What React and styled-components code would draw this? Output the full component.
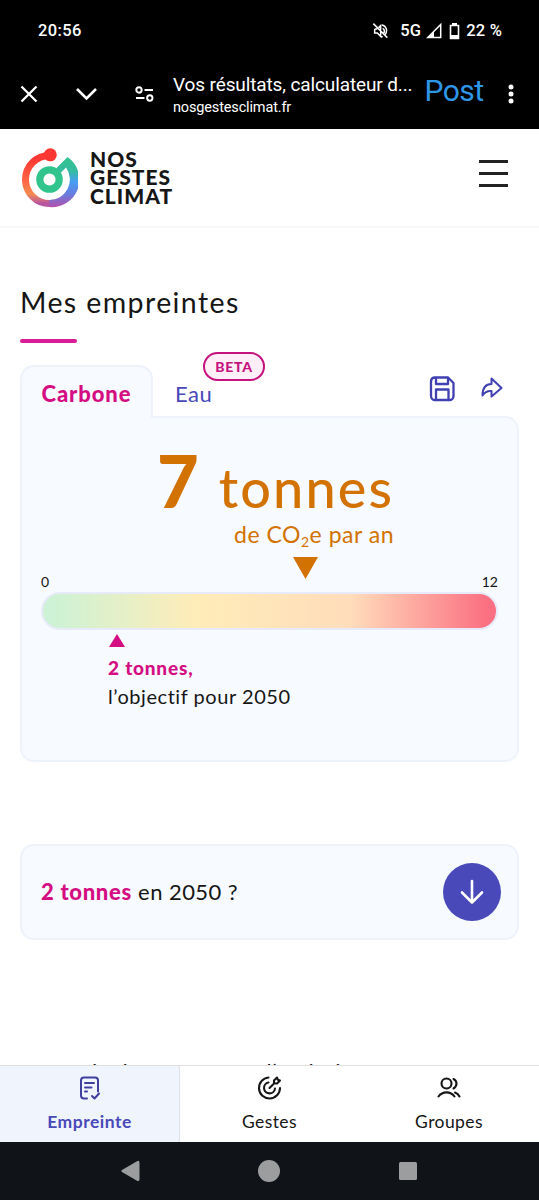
import styled, { createGlobalStyle, css } from "styled-components";

const GlobalStyle = createGlobalStyle`
  * {
    box-sizing: border-box;
  }

  body {
    margin: 0;
    background: #fff;
    overflow: hidden;
  }

  p, h1, h2 {
    margin: 0;
    font-weight: 400;
  }

  button {
    padding: 0;
    border: 0;
    background: none;
    font: inherit;
    color: inherit;
  }
`;

const Screen = styled.div`
  display: flex;
  flex-direction: column;
  width: 539px;
  height: 1200px;
  overflow: hidden;
  background: #fff;
  color: #161616;
  font-family: Lato, "Open Sans", sans-serif;
  white-space: nowrap;

  svg {
    display: block;
    flex: none;
  }
`;

/* letter-spacing and size change from one label to the next */
const Text = styled.span`
  font-size: ${(p) => p.$size}px;
  line-height: ${(p) => p.$line || p.$size + 6}px;
  font-weight: ${(p) => p.$weight || 400};
  letter-spacing: ${(p) => p.$spacing || 0}px;
  color: ${(p) => p.$color || "inherit"};
`;

const StatusBar = styled.div`
  display: flex;
  align-items: center;
  justify-content: space-between;
  height: 62px;
  padding: 0 37px 0 38px;
  background: #000;
  color: #fff;
  font-family: Roboto, sans-serif;
`;

const StatusIcons = styled.div`
  display: flex;
  align-items: center;
  gap: 5px;

  > svg:first-child {
    margin-right: 7px;
  }
`;

const BrowserBar = styled.div`
  display: flex;
  align-items: center;
  height: 67px;
  padding: 0 19px 3px 20px;
  background: #000;
  color: #fff;
  font-family: Roboto, sans-serif;
`;

const PageInfo = styled.div`
  display: flex;
  flex-direction: column;
  width: 253px;
  margin: 4px 0 0 19px;
`;

const PostLabel = styled.p`
  width: 61px;
  padding-bottom: 6px;
  font-size: 30px;
  line-height: 34px;
  letter-spacing: -0.5px;
  color: #2f97e8;
`;

const SiteHeader = styled.header`
  display: flex;
  align-items: center;
  justify-content: space-between;
  height: 99px;
  padding: 0 31px 0 21px;
  border-bottom: 2px solid #f7f7f8;
`;

const Brand = styled.div`
  display: flex;
  align-items: center;
  gap: 12px;
`;

const BrandName = styled.p`
  font-size: 21px;
  line-height: 18.4px;
  font-weight: 900;
  letter-spacing: 1px;
`;

const BurgerButton = styled.button`
  display: flex;
  flex-direction: column;
  gap: 9px;
  width: 29px;
  margin-bottom: 8px;

  > span {
    width: 100%;
    height: 3px;
    background: #222;
  }
`;

const Content = styled.main`
  display: flex;
  flex-direction: column;
  height: 837px;
  padding: 55px 20px 0;
  overflow: hidden;
`;

const Title = styled.h1`
  flex: none;
  height: 38px;
  font-size: 28.5px;
  line-height: 38px;
  letter-spacing: 1.4px;
`;

const TitleBar = styled.div`
  flex: none;
  width: 57px;
  height: 4px;
  margin-top: 18px;
  border-radius: 2px;
  background: #da1c96;
`;

const Tabs = styled.div`
  display: flex;
  flex: none;
  height: 53px;
  margin-top: 22px;
`;

const panel = css`
  border: 2px solid #eef3fb;
  background: #f7faff;
`;

const ActiveTab = styled.button`
  ${panel}
  position: relative;
  z-index: 1;
  width: 133px;
  height: 53px;
  padding-top: 3px;
  border-bottom: 0;
  border-radius: 14px 14px 0 0;
`;

const WaterTab = styled.button`
  position: relative;
  height: 53px;
  margin-left: 22px;
  padding-top: 5px;
`;

const BetaBadge = styled.span`
  position: absolute;
  top: -13px;
  left: 28px;
  display: flex;
  align-items: center;
  justify-content: center;
  width: 62px;
  height: 29px;
  border: 2px solid #c6127f;
  border-radius: 15px;
  background: #fdeef8;
`;

const Actions = styled.div`
  display: flex;
  gap: 24px;
  margin-left: auto;
  padding: 10px 15px 0 0;
`;

const FootprintCard = styled.section`
  ${panel}
  display: flex;
  flex-direction: column;
  flex: none;
  height: 346px;
  margin-top: -2px;
  padding: 23px 19px 0 19px;
  border-radius: 0 14px 14px 14px;
`;

const Total = styled.div`
  display: flex;
  flex-direction: column;
  align-items: flex-end;
  width: 353px;
  color: #d27200;
`;

const TotalValue = styled.div`
  display: flex;
  align-items: baseline;
  gap: 20px;
  height: 79px;
`;

const Unit = styled.p`
  height: 28px;
  font-size: 23px;
  line-height: 28px;
  letter-spacing: 0.5px;

  > small {
    position: relative;
    top: 4px;
    font-size: 14px;
  }
`;

const UserMark = styled.svg`
  margin: 9px 0 0 252px;
`;

const Scale = styled.div`
  display: flex;
  justify-content: space-between;
  height: 19px;
  margin-top: -6px;
`;

const Gauge = styled.div`
  height: 38px;
  border: 2px solid #e7ebf9;
  border-radius: 19px;
  background: linear-gradient(90deg, #cdf2d5 2%, #ffecb8 34%, #ffdcbb 68%, #fb7082 98%);
`;

const Goal = styled.div`
  display: flex;
  flex-direction: column;
  margin: 4px 0 0 67px;

  > svg {
    margin: 0 0 6px 1px;
  }
`;

const GoalCard = styled.section`
  ${panel}
  display: flex;
  align-items: center;
  justify-content: space-between;
  flex: none;
  height: 96px;
  margin-top: 82px;
  padding: 0 16px 0 19px;
  border-radius: 14px;
`;

const RoundButton = styled.button`
  display: flex;
  align-items: center;
  justify-content: center;
  width: 58px;
  height: 58px;
  border-radius: 50%;
  background: #4949ba;
`;

/* only the top of this heading shows above the bottom nav */
const NextTitle = styled.h2`
  flex: none;
  height: 34px;
  margin-top: 115px;
  font-size: 22px;
  line-height: 34px;
  letter-spacing: 0.8px;
`;

const BottomNav = styled.nav`
  display: grid;
  grid-template-columns: 180px 179px 180px;
  height: 77px;
  border-top: 1px solid #e0e0e0;
`;

const NavItem = styled.a`
  display: flex;
  flex-direction: column;
  align-items: center;
  gap: 10px;
  padding-top: 9px;
  background: ${(p) => (p.$active ? "#eff4fd" : "#fff")};
  border-right: ${(p) => (p.$active ? "1px solid #dfe1e8" : "0")};
  color: ${(p) => (p.$active ? "#4949ba" : "#161616")};
`;

const SystemNav = styled.div`
  display: grid;
  grid-template-columns: 121px 137px 140px 1fr;
  align-items: center;
  height: 58px;
  background: #101418;

  > svg:first-of-type {
    grid-column: 2;
  }
`;

function Logo() {
  return (
    <svg width="57" height="60" viewBox="0 0 57 60" fill="none">
      <defs>
        <linearGradient id="left" x1="0" y1="0" x2="0" y2="1">
          <stop offset="0.1" stopColor="#ff3a34" />
          <stop offset="0.55" stopColor="#ff6845" />
          <stop offset="0.8" stopColor="#f58b50" />
          <stop offset="1" stopColor="#b855a0" />
        </linearGradient>
        <linearGradient id="right" x1="0" y1="0" x2="0" y2="1">
          <stop offset="0" stopColor="#31c48d" />
          <stop offset="0.28" stopColor="#36bba0" />
          <stop offset="0.5" stopColor="#469df5" />
          <stop offset="0.75" stopColor="#697bdc" />
          <stop offset="1" stopColor="#b550ac" />
        </linearGradient>
      </defs>
      <path d="M28.500 7.500A24 24 0 0 0 28.500 55.500" stroke="url(#left)" strokeWidth="7" />
      <path d="M46.500 9A27.500 27.500 0 0 1 28 59L28 52A20.500 20.500 0 0 0 45 19.500L39.500 25L35 20.500Z" fill="url(#right)" />
      <circle cx="29.300" cy="6.800" r="6.500" fill="#ff3732" />
      <circle cx="28.500" cy="31.500" r="9.700" stroke="#31c48d" strokeWidth="7.200" />
    </svg>
  );
}

function MutedIcon() {
  return (
    <svg width="16" height="16" viewBox="0 0 24 24" fill="none" stroke="#fff" strokeWidth="2.300">
      <path d="M2 1L23 22M4 9v6h4l5 5v-8M4 9h4M10 7l3-3v6M16 8c2 1 3 4 2 7M15 3c6 1 9 8 5 14M16 20l-2 1" />
    </svg>
  );
}

const ink = { fill: "none", stroke: "currentColor", strokeLinecap: "round", strokeLinejoin: "round" };

function App() {
  return (
    <Screen>
      <GlobalStyle />

      <StatusBar>
        <Text $size={16.5} $weight={500} $spacing={0.4}>20:56</Text>
        <StatusIcons>
          <MutedIcon />
          <Text $size={16.5} $weight={500} $spacing={0.2}>5G</Text>
          <svg width="16" height="16" viewBox="0 0 16 16" fill="none" stroke="#fff" strokeWidth="1.500">
            <path d="M14.700 1.500v13H1.700z" />
            <path d="M8 8.500v6H2z" fill="#fff" stroke="none" />
          </svg>
          <svg width="14" height="17" viewBox="-2.500 0 14 17">
            <path d="M2.500 0h5v2h-5z" fill="#fff" />
            <path d="M1 2.500h8v13H1z" fill="none" stroke="#fff" strokeWidth="1.600" />
            <path d="M1 12h8v4H1z" fill="#fff" />
          </svg>
          <Text $size={16.5} $weight={500} $spacing={0.2}>22 %</Text>
        </StatusIcons>
      </StatusBar>

      <BrowserBar>
        <svg width="18" height="18" viewBox="0 0 18 18" stroke="#fff" strokeWidth="2.300">
          <path d="M1.500 1.500l15 15M16.500 1.500l-15 15" />
        </svg>
        <svg width="60" height="18" viewBox="-38 0 60 18" fill="none" stroke="#fff" strokeWidth="2.600">
          <path d="M1 4l9.500 9.500L20 4" />
        </svg>
        <svg width="56" height="18" viewBox="-37 0 56 18" fill="none" stroke="#fff" strokeWidth="1.900">
          <circle cx="4" cy="5" r="2.700" />
          <circle cx="14.800" cy="13" r="2.700" />
          <path d="M9.500 5H18M1 13h8.500" />
        </svg>
        <PageInfo>
          <Text $size={19} $line={24} $spacing={-0.12}>Vos résultats, calculateur d...</Text>
          <Text $size={14.5} $line={22} $spacing={-0.15}>nosgestesclimat.fr</Text>
        </PageInfo>
        <PostLabel>Post</PostLabel>
        <svg width="35" height="22" viewBox="-21 0 35 22" fill="#fff">
          <circle cx="5" cy="4" r="2.500" />
          <circle cx="5" cy="11" r="2.500" />
          <circle cx="5" cy="18" r="2.500" />
        </svg>
      </BrowserBar>

      <SiteHeader>
        <Brand>
          <Logo />
          <BrandName>NOS<br />GESTES<br />CLIMAT</BrandName>
        </Brand>
        <BurgerButton aria-label="Menu">
          <span />
          <span />
          <span />
        </BurgerButton>
      </SiteHeader>

      <Content>
        <Title>Mes empreintes</Title>
        <TitleBar />

        <Tabs>
          <ActiveTab>
            <Text $size={22} $weight={900} $spacing={0.9} $color="#d40d83">Carbone</Text>
          </ActiveTab>
          <WaterTab>
            <Text $size={22} $spacing={0.5} $color="#4949ba">Eau</Text>
            <BetaBadge>
              <Text $size={14} $weight={900} $spacing={0.7} $color="#c6127f">BETA</Text>
            </BetaBadge>
          </WaterTab>
          <Actions>
            <svg width="27" height="28" viewBox="0 0 27 28" color="#4040b2" strokeWidth="2.300" {...ink}>
              <path d="M6 2.500h13l5.500 5.500v13a4 4 0 0 1-4 4H6a4 4 0 0 1-4-4v-15a4 4 0 0 1 4-3.500z" />
              <path d="M7 3v6h12V3M7 25V14.500h12.500V25" />
            </svg>
            <svg width="24" height="26" viewBox="0 0 24 26" color="#4040b2" strokeWidth="2" {...ink}>
              <path d="M11.500 3.500l10 9.500-10 8.500v-5.500c-4.500-.5-7 1.500-9 4.500 0-7 3-11.500 9-11.500z" />
            </svg>
          </Actions>
        </Tabs>

        <FootprintCard>
          <Total>
            <TotalValue>
              <Text $size={72} $line={78} $weight={900}>7</Text>
              <Text $size={54} $line={78} $weight={500} $spacing={2.1}>tonnes</Text>
            </TotalValue>
            <Unit>de CO<small>2</small>e par an</Unit>
          </Total>
          <UserMark width="25" height="22" viewBox="0 0 25 22">
            <path d="M0 0h25L12.500 22z" fill="#d27200" />
          </UserMark>
          <Scale>
            <Text $size={14} $line={17}>0</Text>
            <Text $size={14} $line={17}>12</Text>
          </Scale>
          <Gauge />
          <Goal>
            <svg width="16" height="13" viewBox="0 0 16 13">
              <path d="M8 0l8 13H0z" fill="#d40d83" />
            </svg>
            <Text $size={19} $line={29} $weight={900} $spacing={0.8} $color="#d40d83">2 tonnes,</Text>
            <Text $size={20} $line={29} $spacing={0.55}>l’objectif pour 2050</Text>
          </Goal>
        </FootprintCard>

        <GoalCard>
          <Text $size={22} $spacing={0.45}>
            <Text $size={22} $weight={900} $spacing={0.7} $color="#d40d83">2 tonnes</Text> en 2050 ?
          </Text>
          <RoundButton aria-label="Voir la suite">
            <svg width="24" height="26" viewBox="0 0 24 26" color="#fff" strokeWidth="2.600" {...ink}>
              <path d="M12 2v21.500M2 13.500l10 10 10-10" />
            </svg>
          </RoundButton>
        </GoalCard>

        <NextTitle>Mes principaux postes d’émission</NextTitle>
      </Content>

      <BottomNav>
        <NavItem $active>
          <svg width="24" height="26" viewBox="1 -0.500 24 26" color="#3f3f9f" strokeWidth="2" {...ink}>
            <path d="M10 23H7a3 3 0 0 1-3-3V5a3 3 0 0 1 3-3h11a3 3 0 0 1 3 3v11" />
            <path d="M8 7.500h9M8 12h6.500M8 16h2M15 20.500l2.500 2.500 4.500-5" />
          </svg>
          <Text $size={17.5} $line={22} $weight={700} $spacing={0.5}>Empreinte</Text>
        </NavItem>
        <NavItem>
          <svg width="26" height="26" viewBox="0.500 0 26 26" strokeWidth="2.100" {...ink}>
            <path d="M12 2.500A10.500 10.500 0 1 0 23.500 13M12 7.500a5.500 5.500 0 1 0 6.500 6M13 13L18 8M17.500 5.500l3-3 .8 2.200 2.200.8-3 3h-3z" />
          </svg>
          <Text $size={17.5} $line={22} $spacing={0.4}>Gestes</Text>
        </NavItem>
        <NavItem>
          <svg width="26" height="26" viewBox="0 0 26 26" strokeWidth="2.100" {...ink}>
            <circle cx="10.500" cy="8.500" r="5" />
            <path d="M2.500 21.500c4-5.500 12-5.500 16 0M17.500 4c4 2 4 7 0 9.500M19 17.500c2 .7 3.500 2 4.500 4" />
          </svg>
          <Text $size={17.5} $line={22} $spacing={0.4}>Groupes</Text>
        </NavItem>
      </BottomNav>

      <SystemNav>
        <svg width="19" height="22" viewBox="0 0 19 22" fill="#9c9d9f">
          <path d="M1 10L16 1.200Q18.500 0 18.500 3V19Q18.500 22 16 20.800L1 12Q-.3 11 1 10z" />
        </svg>
        <svg width="22" height="22" viewBox="0 0 22 22" fill="#9c9d9f">
          <circle cx="11" cy="11" r="11" />
        </svg>
        <svg width="20" height="20" viewBox="0 0 20 20" fill="#9c9d9f">
          <rect x="1" y="1" width="18" height="18" rx="1.500" />
        </svg>
      </SystemNav>
    </Screen>
  );
}

export default App;
